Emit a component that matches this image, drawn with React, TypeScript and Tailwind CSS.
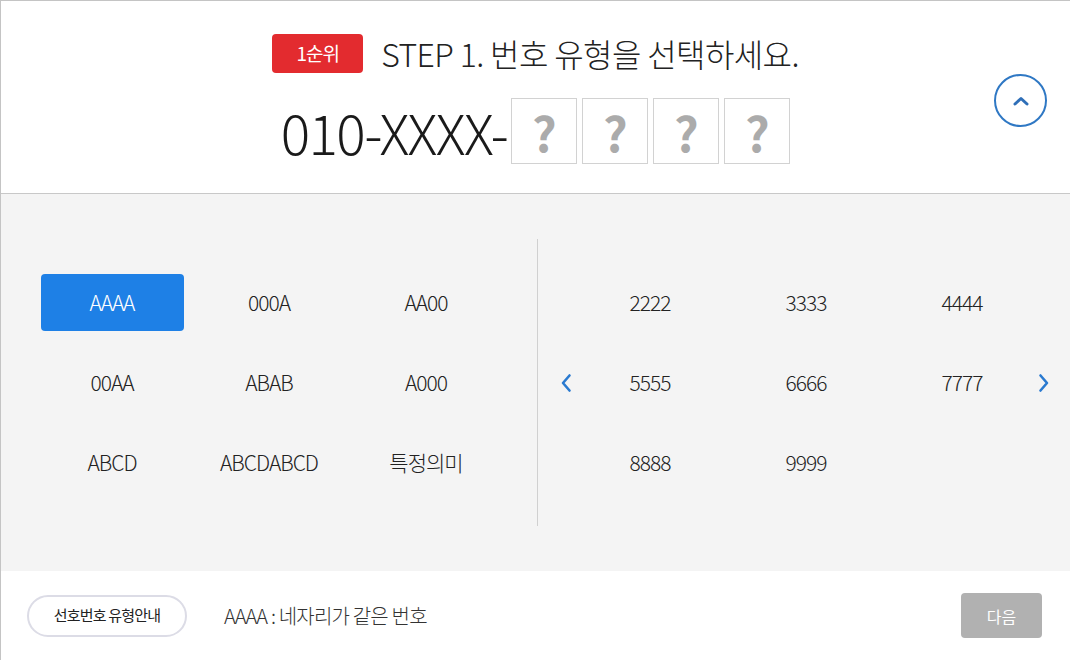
import React from "react";

const font = { fontFamily: '"Noto Sans CJK KR", "Noto Sans", sans-serif' };

const leftItems = ["AAAA", "000A", "AA00", "00AA", "ABAB", "A000", "ABCD", "ABCDABCD", "특정의미"];
const rightItems = ["2222", "3333", "4444", "5555", "6666", "7777", "8888", "9999"];

export default function App() {
  return (
    <div
      className="w-[1070px] h-[660px] bg-white border-t border-l border-[#c4c4c4] flex flex-col overflow-hidden text-[#222]"
      style={font}
    >
      {/* Header */}
      <div className="relative h-[193px] shrink-0 border-b border-[#c8c8c8] flex flex-col items-center pt-[31px]">
        <div className="flex items-center gap-[18px]">
          <span className="w-[91px] h-[39px] rounded-[4px] bg-[#e32b2f] text-white text-[19px] flex items-center justify-center tracking-[-1px]">
            1순위
          </span>
          <span className="text-[32px] leading-[42px] tracking-[-0.6px] text-[#222] font-light">
            STEP 1. 번호 유형을 선택하세요.
          </span>
        </div>
        <div className="flex items-center mt-[24px]">
          <span className="text-[55px] leading-[66px] tracking-[-1.6px] text-[#1a1a1a] mr-[4px] font-light">010-XXXX-</span>
          <div className="flex gap-[5px]">
            {[0, 1, 2, 3].map((i) => (
              <div
                key={i}
                className="w-[66px] h-[66px] border border-[#d2d2d2] bg-white flex items-center justify-center text-[48px] font-bold text-[#ababab]"
              >
                ?
              </div>
            ))}
          </div>
        </div>
        <button className="absolute right-[23px] top-[73px] w-[53px] h-[53px] rounded-full border-2 border-[#2f78c4] flex items-center justify-center bg-white">
          <svg width="16" height="10" viewBox="0 0 16 10">
            <path d="M2 8 L8 2.5 L14 8" fill="none" stroke="#2f6fb8" strokeWidth="3" strokeLinecap="round" strokeLinejoin="round" />
          </svg>
        </button>
      </div>

      {/* Selection area */}
      <div className="h-[377px] shrink-0 bg-[#f4f4f4] flex py-[45px]">
        <div className="w-[537px] shrink-0 border-r border-[#d0d0d0] flex items-center justify-center">
          <div className="grid grid-cols-[157px_157px_157px] grid-rows-[80px_80px_80px]">
            {leftItems.map((t, i) => (
              <div key={t} className="flex items-center justify-center">
                {i === 0 ? (
                  <div className="w-[143px] h-[57px] rounded-[4px] bg-[#1e80e6] text-white text-[21px] tracking-[-1px] font-light flex items-center justify-center">
                    {t}
                  </div>
                ) : (
                  <span className="text-[21px] tracking-[-1px] text-[#222] font-light">{t}</span>
                )}
              </div>
            ))}
          </div>
        </div>
        <div className="relative flex-1 flex items-center justify-center">
          <button className="absolute left-[20px] top-1/2 -translate-y-1/2 w-[16px] h-[24px] flex items-center justify-center">
            <svg width="12" height="20" viewBox="0 0 12 20">
              <path d="M9.5 2.5 L3 10 L9.5 17.5" fill="none" stroke="#2a7ad0" strokeWidth="2.6" strokeLinecap="round" strokeLinejoin="round" />
            </svg>
          </button>
          <div className="grid grid-cols-[156px_156px_156px] grid-rows-[80px_80px_80px] ml-[4px]">
            {rightItems.map((t) => (
              <div key={t} className="flex items-center justify-center">
                <span className="text-[21px] tracking-[-1px] text-[#222] font-light">{t}</span>
              </div>
            ))}
          </div>
          <button className="absolute right-[18px] top-1/2 -translate-y-1/2 w-[16px] h-[24px] flex items-center justify-center">
            <svg width="12" height="20" viewBox="0 0 12 20">
              <path d="M2.5 2.5 L9 10 L2.5 17.5" fill="none" stroke="#2a7ad0" strokeWidth="2.6" strokeLinecap="round" strokeLinejoin="round" />
            </svg>
          </button>
        </div>
      </div>

      {/* Footer */}
      <div className="flex-1 flex items-center pl-[26px] pr-[28px]">
        <button className="w-[160px] h-[42px] rounded-full border-2 border-[#dcdce6] bg-white text-[15px] tracking-[-0.8px] text-[#222] flex items-center justify-center">
          선호번호 유형안내
        </button>
        <span className="ml-[37px] text-[20px] tracking-[-0.8px] text-[#333] font-light">AAAA : 네자리가 같은 번호</span>
        <button className="ml-auto w-[81px] h-[45px] rounded-[4px] bg-[#b1b1b1] text-white text-[16px] flex items-center justify-center">
          다음
        </button>
      </div>
    </div>
  );
}
